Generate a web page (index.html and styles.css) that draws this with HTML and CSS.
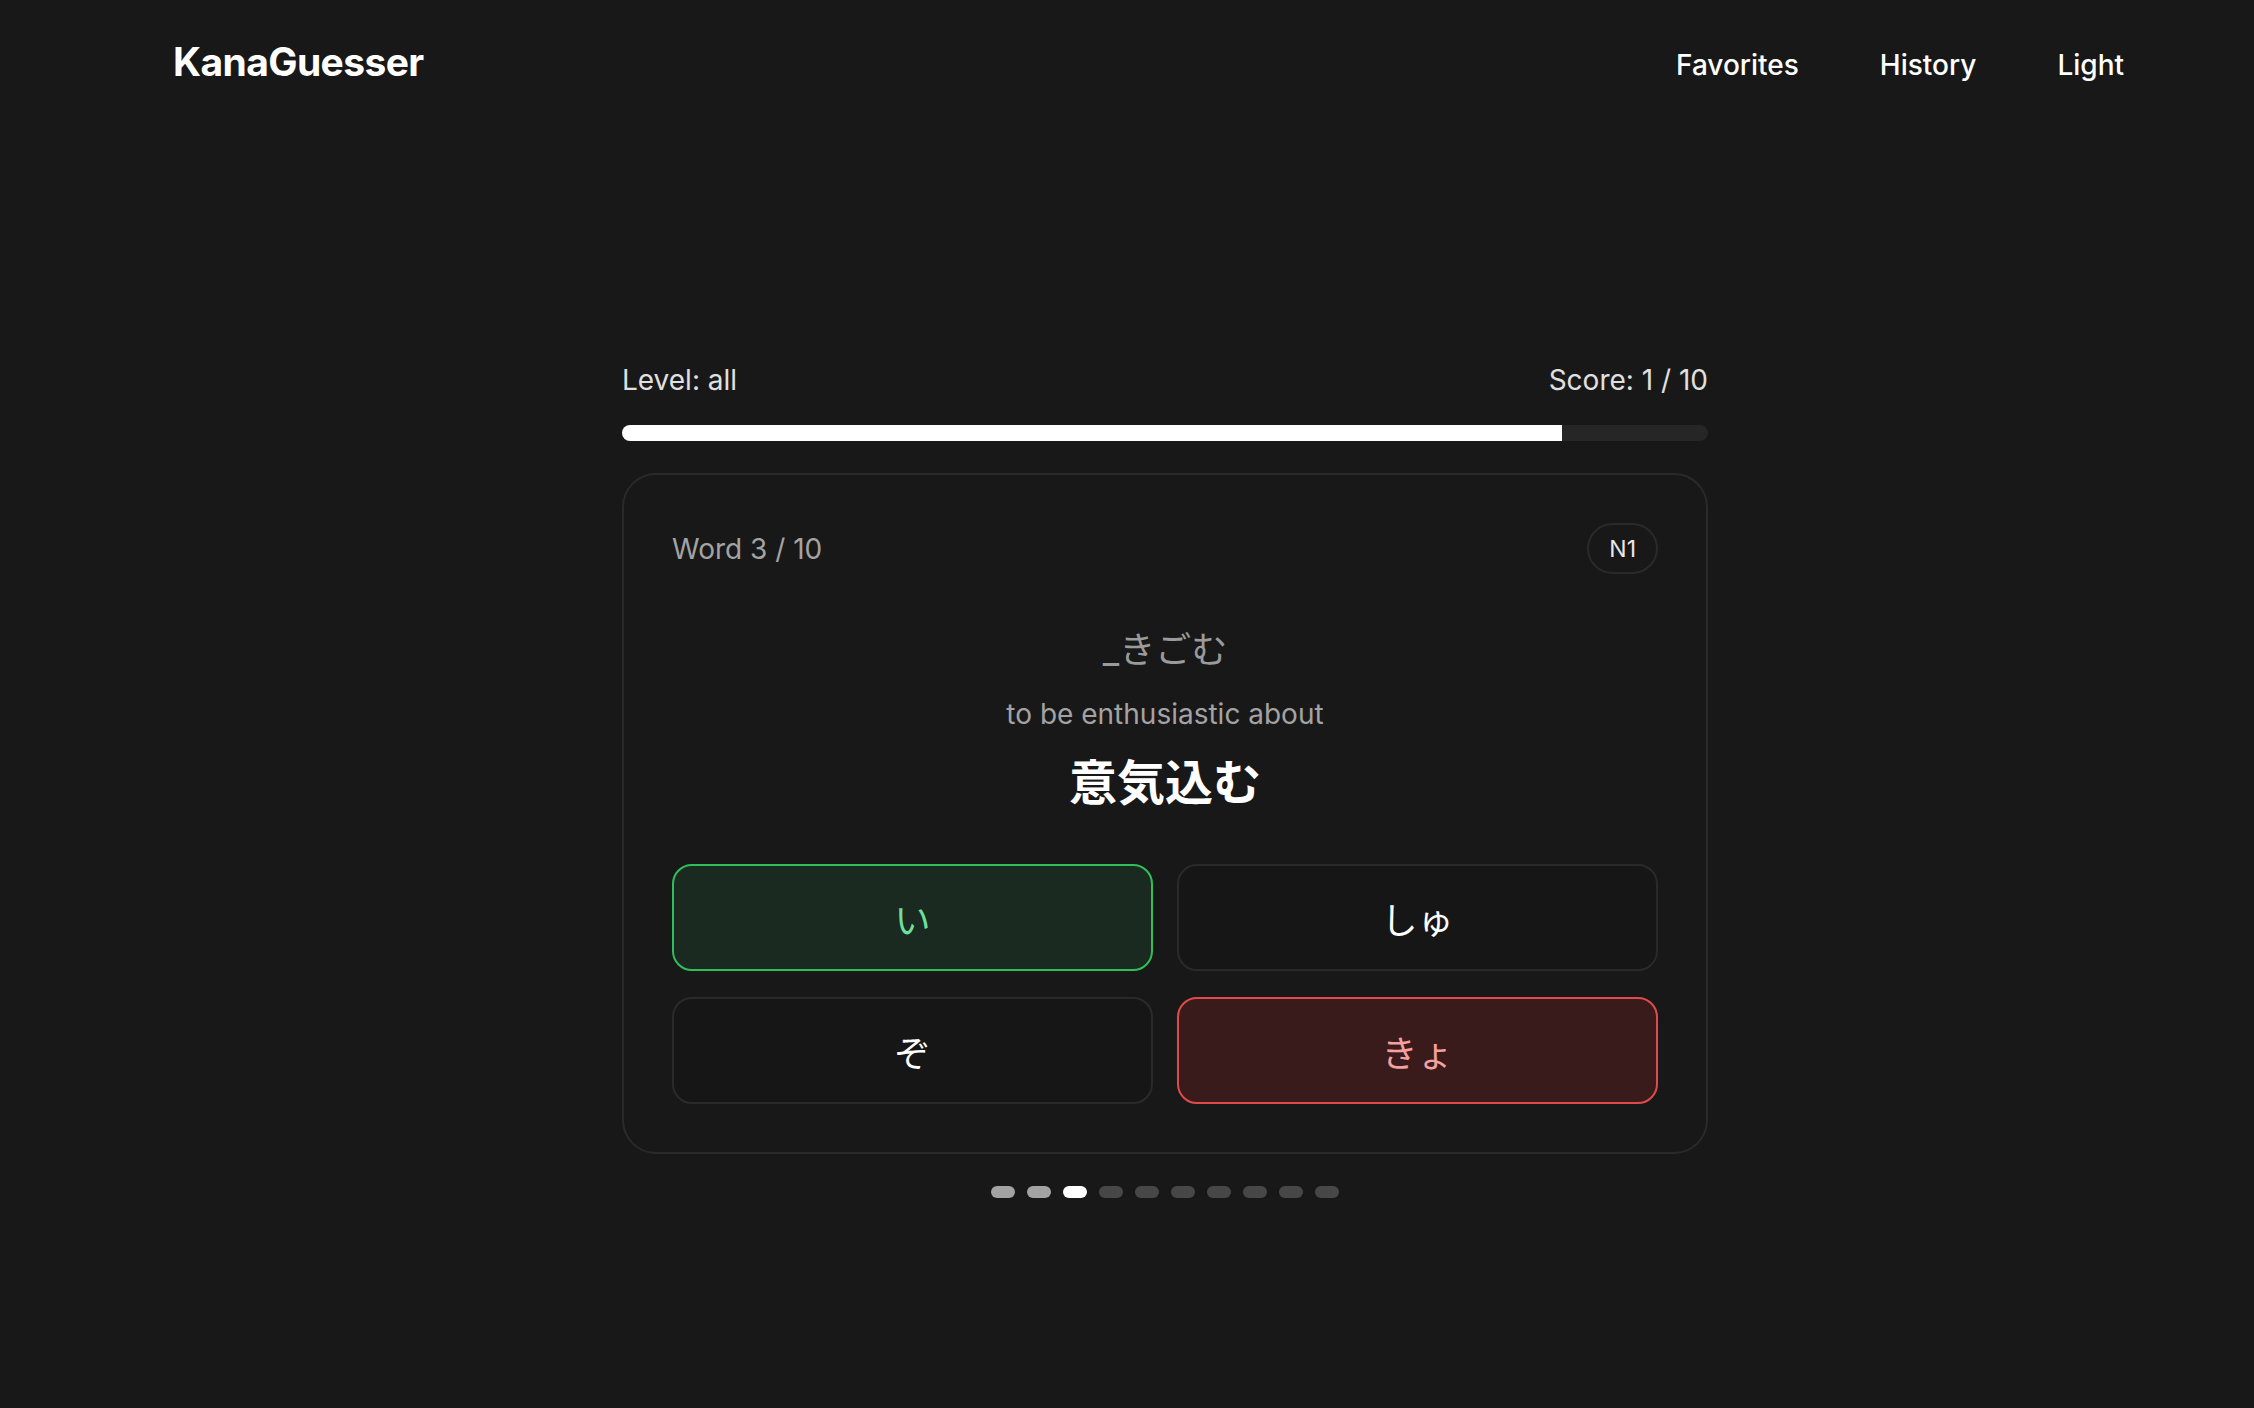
FILE: index.html
```html
<!DOCTYPE html>
<html lang="en">
<head>
<meta charset="utf-8">
<title>KanaGuesser</title>
<link rel="stylesheet" href="styles.css">
</head>
<body>
<header class="site-header">
  <div class="logo">KanaGuesser</div>
  <nav class="nav">
    <a class="nav-link" href="#">Favorites</a>
    <a class="nav-link" href="#">History</a>
    <a class="nav-link" href="#">Light</a>
  </nav>
</header>
<main class="main">
  <section class="quiz">
    <div class="stats">
      <span>Level: all</span>
      <span>Score: 1 / 10</span>
    </div>
    <div class="progress"><div class="progress-fill" style="width: 86.6%"></div></div>
    <div class="card">
      <div class="card-head">
        <span class="word-count">Word 3 / 10</span>
        <span class="badge">N1</span>
      </div>
      <div class="prompt">
        <div class="hint">_きごむ</div>
        <div class="meaning">to be enthusiastic about</div>
        <div class="kanji">意気込む</div>
      </div>
      <div class="options">
        <button class="option correct">い</button>
        <button class="option">しゅ</button>
        <button class="option">ぞ</button>
        <button class="option wrong">きょ</button>
      </div>
    </div>
    <div class="dots">
      <span class="dot done"></span>
      <span class="dot done"></span>
      <span class="dot current"></span>
      <span class="dot"></span>
      <span class="dot"></span>
      <span class="dot"></span>
      <span class="dot"></span>
      <span class="dot"></span>
      <span class="dot"></span>
      <span class="dot"></span>
    </div>
  </section>
</main>
</body>
</html>
```
FILE: styles.css
```css
* { box-sizing: border-box; }

html, body {
  margin: 0;
  padding: 0;
  background: #181818;
  color: #ffffff;
  font-family: Inter, "Noto Sans CJK JP", sans-serif;
}

.site-header {
  display: flex;
  justify-content: space-between;
  align-items: flex-start;
  padding: 38px 130px 0 173px;
}

.logo {
  font-size: 39px;
  line-height: 48px;
  font-weight: 700;
  letter-spacing: -0.6px;
}

.nav {
  display: flex;
  gap: 81px;
  padding-top: 3px;
}

.nav-link {
  color: #ffffff;
  text-decoration: none;
  font-size: 28px;
  line-height: 48px;
  font-weight: 500;
}

.main {
  display: flex;
  justify-content: center;
  padding-left: 76px;
  padding-top: 271px;
}

.quiz {
  width: 1086px;
  display: flex;
  flex-direction: column;
}

.stats {
  display: flex;
  justify-content: space-between;
  font-size: 28px;
  line-height: 40px;
  color: #e0e0e0;
}

.progress {
  margin-top: 25px;
  height: 16px;
  border-radius: 8px;
  background: #262626;
  overflow: hidden;
}

.progress-fill {
  height: 100%;
  background: #ffffff;
}

.card {
  margin-top: 32px;
  border: 2px solid #2a2a2a;
  border-radius: 34px;
  padding: 48px;
  background: #181818;
}

.card-head {
  display: flex;
  justify-content: space-between;
  align-items: center;
}

.word-count {
  font-size: 28px;
  line-height: 40px;
  color: #a3a3a3;
}

.badge {
  display: inline-flex;
  align-items: center;
  height: 51px;
  padding: 0 20px;
  border: 2px solid #2a2a2a;
  border-radius: 999px;
  font-size: 23px;
  color: #e8e8e8;
}

.prompt {
  display: flex;
  flex-direction: column;
  align-items: center;
  margin-top: 52px;
}

.hint {
  font-size: 36px;
  line-height: 48px;
  color: #9b9b9b;
}

.meaning {
  margin-top: 21px;
  font-size: 28px;
  line-height: 38px;
  color: #a3a3a3;
}

.kanji {
  margin-top: 19px;
  font-size: 48px;
  line-height: 62px;
  font-weight: 700;
  color: #ffffff;
}

.options {
  margin-top: 50px;
  display: grid;
  grid-template-columns: 1fr 1fr;
  column-gap: 24px;
  row-gap: 26px;
}

.option {
  height: 107px;
  border: 2px solid #2a2a2a;
  border-radius: 20px;
  background: #161616;
  color: #ffffff;
  font-family: Inter, "Noto Sans CJK JP", sans-serif;
  font-size: 36px;
  cursor: pointer;
}

.option.correct {
  border-color: #2fbf5a;
  background: #1a2a20;
  color: #6fe09a;
}

.option.wrong {
  border-color: #df4b4b;
  background: #3a1b1b;
  color: #f4a0a0;
}

.dots {
  margin-top: 32px;
  display: flex;
  justify-content: center;
  gap: 12px;
}

.dot {
  width: 24px;
  height: 12px;
  border-radius: 6px;
  background: #474747;
}

.dot.done { background: #a3a3a3; }
.dot.current { background: #ffffff; }
```
